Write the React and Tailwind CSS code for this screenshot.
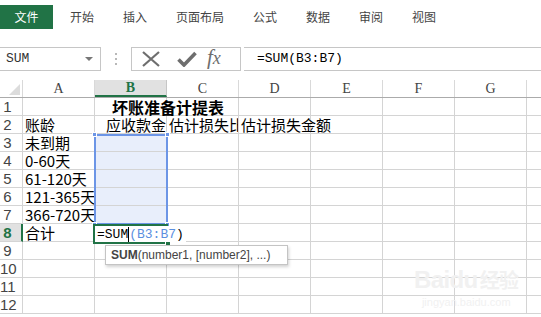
import React from "react";

const CJK = { fontFamily: '"Noto Sans CJK SC", "Noto Sans", sans-serif' };
const MONO = { fontFamily: '"Liberation Mono", "DejaVu Sans Mono", monospace' };
const SERIF = { fontFamily: '"Liberation Serif", "DejaVu Serif", serif' };
const SANS = { fontFamily: '"Liberation Sans", Arial, sans-serif' };

const cols = ["A", "B", "C", "D", "E", "F", "G"];

const data = {
  1: { B: { t: "坏账准备计提表", bold: true, over: true } },
  2: {
    A: { t: "账龄" },
    B: { t: "应收款金额", pl: "pl-[11px]" },
    C: { t: "估计损失比例" },
    D: { t: "估计损失金额", over: true },
  },
  3: { A: { t: "未到期" } },
  4: { A: { t: "0-60天" } },
  5: { A: { t: "61-120天" } },
  6: { A: { t: "121-365天" } },
  7: { A: { t: "366-720天" } },
  8: { A: { t: "合计" } },
};

function Cell({ col, row }) {
  const c = data[row] && data[row][col];
  const sel = col === "B" && row >= 3 && row <= 7;
  return (
    <div
      className={`relative w-[72px] h-[18px] shrink-0 border-r border-b border-[#d4d4d4] ${
        sel ? "bg-[#e8eefb]" : "bg-white"
      } ${c && c.over ? "overflow-visible z-10" : "overflow-hidden"}`}
    >
      {c && (
        <span
          className={`absolute left-0 top-0 whitespace-nowrap text-[15px] leading-[18px] text-black ${
            c.pl ? c.pl : "pl-[2px]"
          } ${c.bold ? "font-bold text-[16px] pl-[17px]" : ""}`}
          style={CJK}
        >
          {c.t}
        </span>
      )}
    </div>
  );
}

function Row({ n }) {
  const active = n === 8;
  return (
    <div className="flex h-[18px]">
      <div
        className={`w-[23px] h-[18px] shrink-0 border-b border-[#d4d4d4] ${
          active ? "bg-[#e1e1e1] border-r-2 border-r-[#217346]" : "bg-white border-r border-r-[#d4d4d4]"
        }`}
      >
        <div
          className={`w-[15px] text-center text-[15px] leading-[18px] ${
            active ? "text-[#217346] font-bold" : "text-[#444]"
          }`}
          style={SANS}
        >
          {n}
        </div>
      </div>
      {cols.map((c) => (
        <Cell key={c} col={c} row={n} />
      ))}
      <div className="w-[14px] h-[18px] shrink-0 border-b border-[#d4d4d4]" />
    </div>
  );
}

export default function App() {
  return (
    <div className="w-[541px] h-[317px] bg-white overflow-hidden relative select-none">
      {/* Tab bar */}
      <div className="h-[31px] flex items-start pt-[5px]" style={CJK}>
        <div className="w-[53px] h-[24px] bg-[#217346] text-white text-[12px] flex items-center justify-center">
          文件
        </div>
        <div className="flex gap-[29px] ml-[17px] h-[24px] items-center text-[12px] text-[#444]">
          <span>开始</span>
          <span>插入</span>
          <span>页面布局</span>
          <span>公式</span>
          <span>数据</span>
          <span>审阅</span>
          <span>视图</span>
        </div>
      </div>

      {/* Formula bar */}
      <div className="mt-[16px] h-[24px] flex items-stretch">
        <div className="w-[101px] h-[24px] border border-l-0 border-[#c6c6c6] flex items-center justify-between pl-[6px] pr-[7px]">
          <span className="text-[13px] text-[#333]" style={MONO}>SUM</span>
          <svg width="8" height="5" viewBox="0 0 8 5">
            <polygon points="0,0 8,0 4,4" fill="#777" />
          </svg>
        </div>
        <div className="w-[30px] flex flex-col items-center justify-center gap-[3px]">
          <div className="w-[2px] h-[2px] bg-[#b8b8b8]" />
          <div className="w-[2px] h-[2px] bg-[#b8b8b8]" />
          <div className="w-[2px] h-[2px] bg-[#b8b8b8]" />
        </div>
        <div className="w-[110px] h-[24px] border border-[#c6c6c6] flex items-center">
          <svg width="20" height="16" viewBox="0 0 20 16" className="ml-[9px]">
            <path d="M2 1 L18 15 M18 1 L2 15" stroke="#6e6e6e" strokeWidth="2.2" fill="none" />
          </svg>
          <svg width="20" height="16" viewBox="0 0 20 16" className="ml-[16px]">
            <path d="M1.5 8.5 L7 14 L18.5 2" stroke="#6e6e6e" strokeWidth="3.6" fill="none" strokeLinejoin="miter" />
          </svg>
          <span
            className="ml-[10px] italic text-[21px] leading-none text-[#6e6e6e] -mt-[3px]"
            style={SERIF}
          >
            f<span className="text-[18px]">x</span>
          </span>
        </div>
        <div className="ml-[3px] flex-1 h-[24px] border-t border-b border-[#c6c6c6] flex items-center pl-[13px]">
          <span className="text-[13px] text-black" style={MONO}>=SUM(B3:B7)</span>
        </div>
      </div>

      {/* Grid */}
      <div className="mt-[9px] relative">
        {/* Column header */}
        <div className="flex h-[18px] border-b border-[#ababab]">
          <div className="w-[23px] h-[17px] shrink-0 border-r border-[#d9d9d9] relative">
            <svg width="22" height="17" viewBox="0 0 22 17" className="absolute left-0 top-0">
              <polygon points="20,4 20,15 9,15" fill="#dcdcdc" />
            </svg>
          </div>
          {cols.map((c) => (
            <div
              key={c}
              className={`w-[72px] h-[17px] shrink-0 border-r flex items-center justify-center text-[14px] leading-none ${
                c === "B"
                  ? "bg-[#e1e1e1] border-[#c6c6c6] text-[#217346] font-bold border-b-2 border-b-[#217346]"
                  : "border-[#d9d9d9] text-[#444]"
              }`}
              style={SERIF}
            >
              {c}
            </div>
          ))}
          <div className="w-[14px] shrink-0" />
        </div>

        {Array.from({ length: 12 }, (_, i) => (
          <Row key={i} n={i + 1} />
        ))}

        {/* Selection B3:B7 */}
        <div className="absolute left-[94px] top-[54px] w-[74px] h-[91px] border-2 border-[#6c95e6] pointer-events-none" />
        <div className="absolute left-[92px] top-[52px] w-[5px] h-[5px] bg-[#6c95e6] border border-white" />
        <div className="absolute left-[165px] top-[52px] w-[5px] h-[5px] bg-[#6c95e6] border border-white" />
        <div className="absolute left-[92px] top-[142px] w-[5px] h-[5px] bg-[#6c95e6] border border-white" />
        <div className="absolute left-[165px] top-[142px] w-[5px] h-[5px] bg-[#6c95e6] border border-white" />

        {/* Active cell B8 */}
        <div className="absolute left-[93px] top-[144px] w-[75px] h-[20px] border-2 border-[#217346] bg-white" />
        <div className="absolute left-[165px] top-[160px] w-[6px] h-[6px] bg-[#217346] border border-white" />
        <div
          className="absolute left-[95px] top-[146px] h-[16px] pl-[2px] pr-[2px] bg-white flex items-center text-[13px] leading-none whitespace-nowrap z-20"
          style={MONO}
        >
          <span className="text-black">=SUM</span>
          <span className="inline-block w-[1px] h-[15px] bg-black" />
          <span className="text-[#5b8fe0]">(B3:B7</span>
          <span className="text-black">)</span>
        </div>

        {/* Tooltip */}
        <div
          className="absolute left-[105px] top-[165px] w-[183px] h-[20px] bg-white border border-[#c4c4c4] shadow-[1px_2px_3px_rgba(0,0,0,0.18)] flex items-center pl-[5px] text-[12px] text-[#444] whitespace-nowrap z-20"
          style={SANS}
        >
          <span className="font-bold">SUM</span>
          <span>(number1, [number2], ...)</span>
        </div>

        {/* Watermark */}
        <div className="absolute left-[414px] top-[188px] flex flex-col items-center text-[#f1f1f1] pointer-events-none z-20" style={SANS}>
          <div className="text-[24px] font-bold leading-none tracking-tight">
            Bai<span>du</span>
            <span className="text-[20px] ml-[2px]" style={CJK}>经验</span>
          </div>
          <div className="text-[11px] leading-none mt-[5px]">jingyan.baidu.com</div>
        </div>
      </div>
    </div>
  );
}
